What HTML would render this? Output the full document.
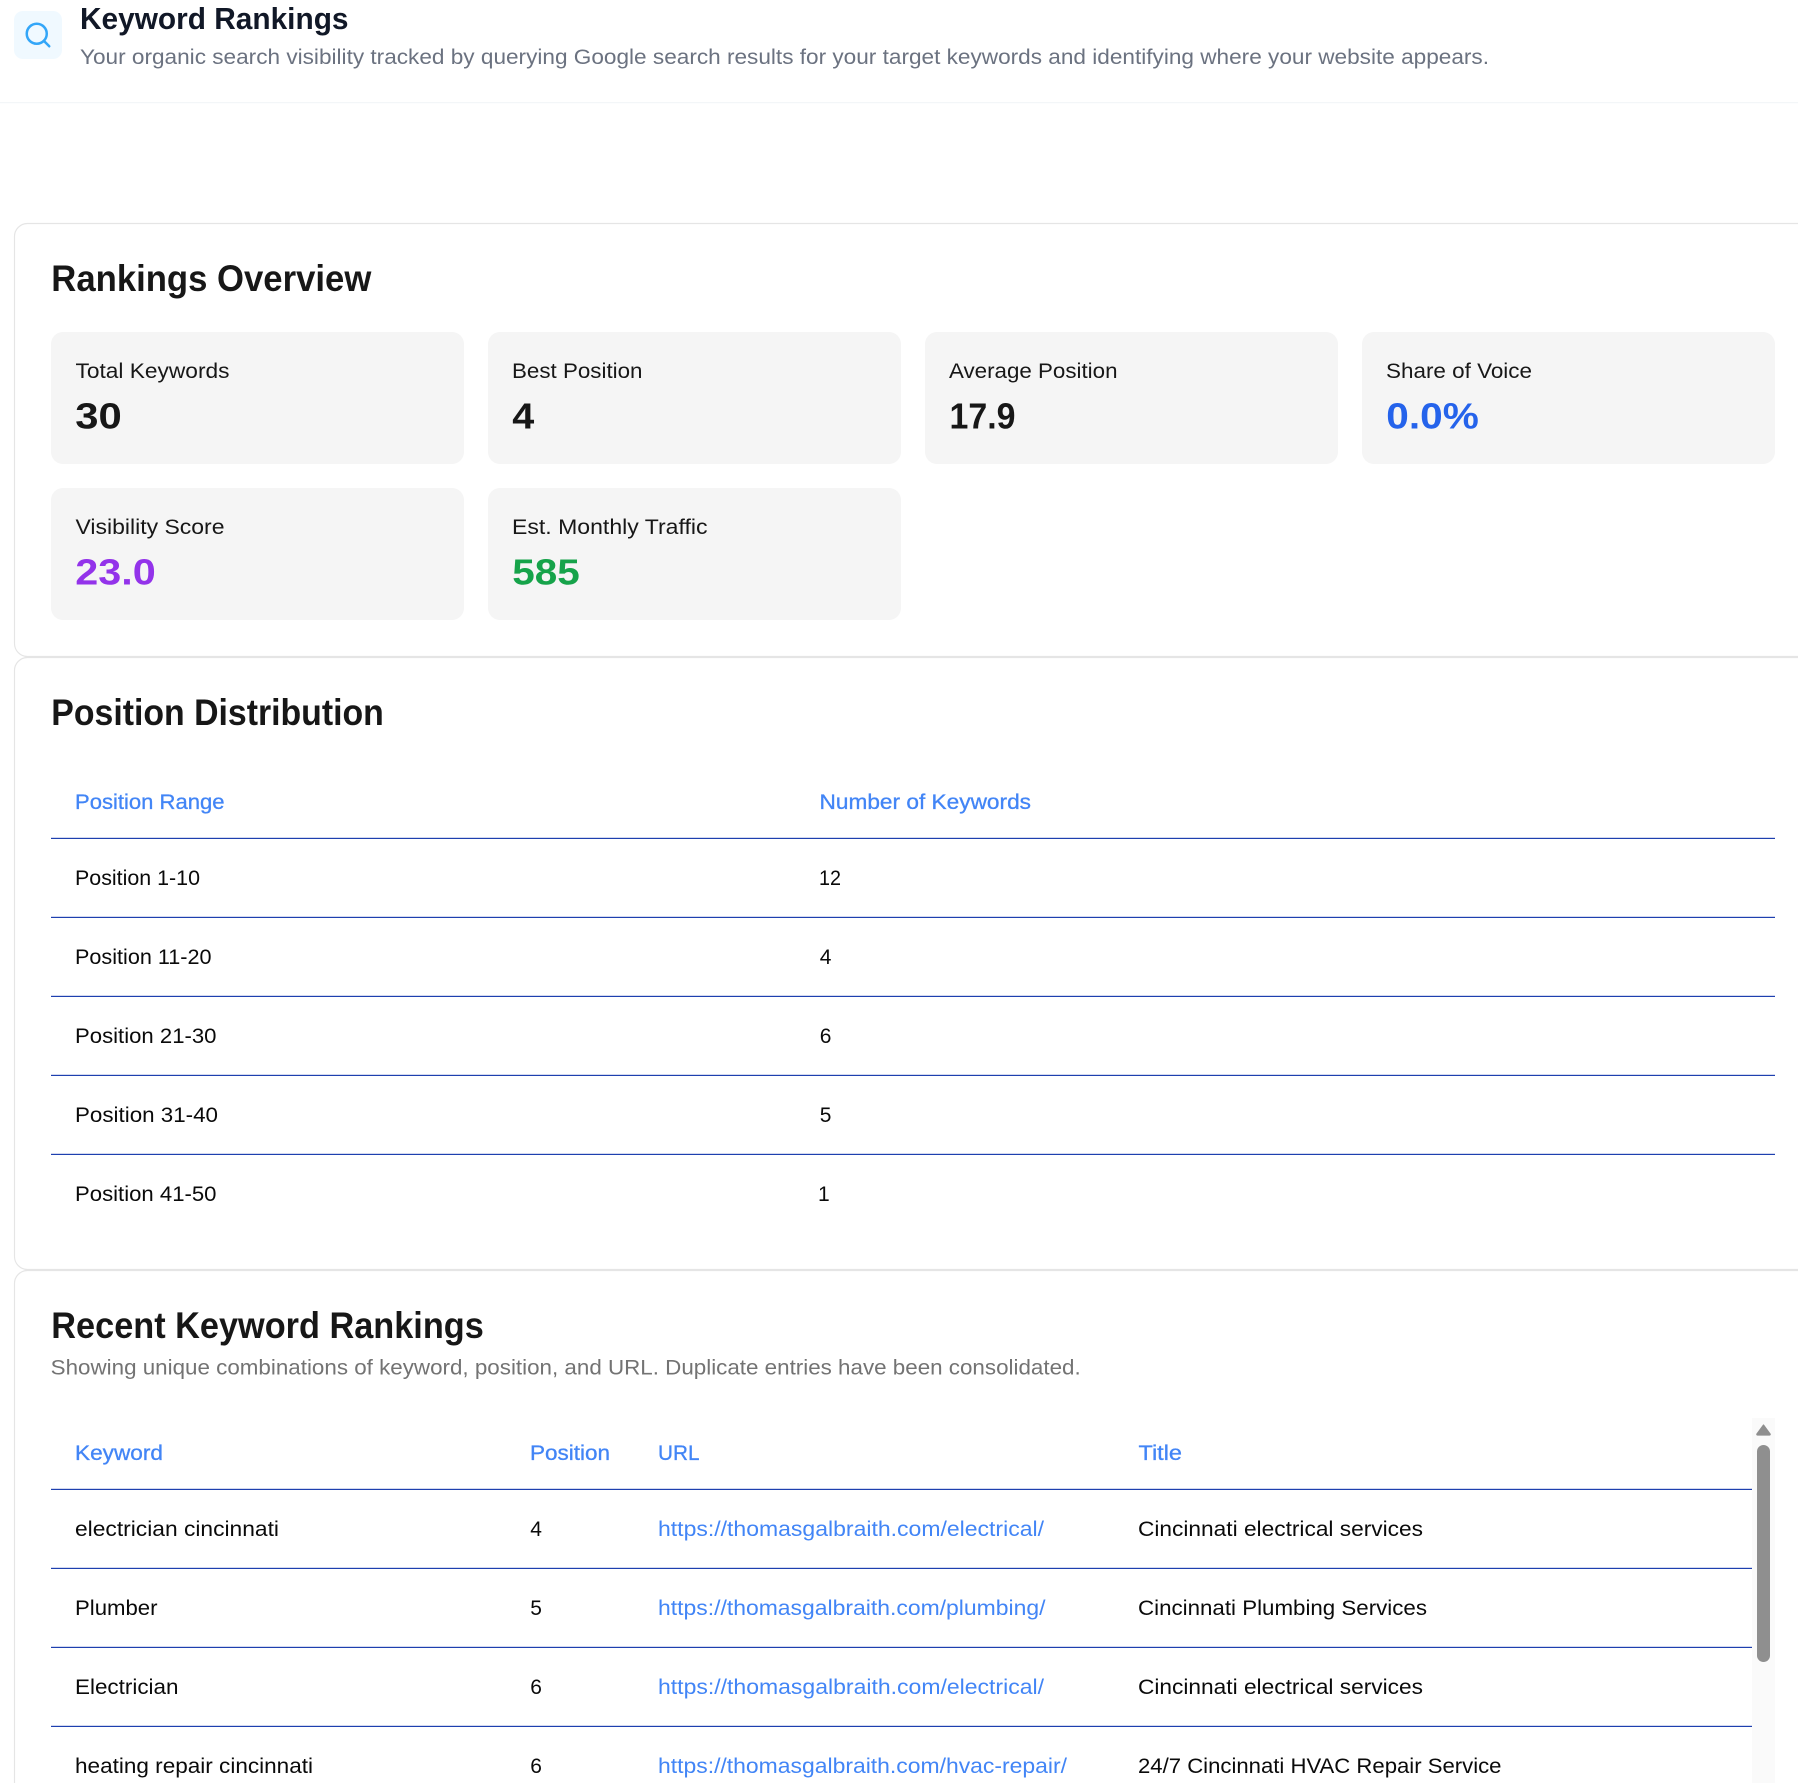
<!DOCTYPE html>
<html lang="en">
<head>
<meta charset="utf-8">
<title>Keyword Rankings</title>
<style>
html,body{margin:0;padding:0;background:#fff;width:1798px;height:1783px;overflow:hidden}
svg{display:block}
text{font-family:"Liberation Sans",Arial,sans-serif;white-space:pre}
.h{font-size:37.5px;font-weight:700;fill:#171717}
.l{font-size:21px;fill:#171717}
.v{font-size:36px;font-weight:700;fill:#171717}
.th{font-size:21px;fill:#4285f6;stroke:#4285f6;stroke-width:.3px}
.td{font-size:21px;fill:#0a0a0a}
.a{font-size:21px;fill:#4285f6}
</style>
</head>
<body>
<svg xmlns="http://www.w3.org/2000/svg" width="1798" height="1783" viewBox="0 0 1798 1783">
<rect width="1798" height="1783" fill="#fff"/>

<!-- header -->
<rect x="14" y="11" width="48" height="48" rx="9" fill="#f0f9ff"/>
<g transform="translate(23 20) scale(1.25)" fill="none" stroke="#33a6f8" stroke-width="2" stroke-linecap="round" stroke-linejoin="round">
<circle cx="11" cy="11" r="8"/>
<path d="m21 21-4.3-4.3"/>
</g>
<text x="80" y="29" font-size="31" font-weight="700" fill="#111827" textLength="268.5" lengthAdjust="spacingAndGlyphs">Keyword Rankings</text>
<text x="80" y="64" font-size="21" fill="#6b7280" textLength="1409" lengthAdjust="spacingAndGlyphs">Your organic search visibility tracked by querying Google search results for your target keywords and identifying where your website appears.</text>
<rect x="0" y="102" width="1798" height="1.2" fill="#f3f6f8"/>

<!-- cards -->
<path d="M1798 223.5H27.5a13 13 0 0 0-13 13V643.5a13 13 0 0 0 13 13H1798" fill="none" stroke="#e5e5e5" stroke-width="1.15"/>
<path d="M1798 657.5H27.5a13 13 0 0 0-13 13V1256.5a13 13 0 0 0 13 13H1798" fill="none" stroke="#e5e5e5" stroke-width="1.15"/>
<path d="M1798 1270.5H27.5a13 13 0 0 0-13 13V1783" fill="none" stroke="#e5e5e5" stroke-width="1.15"/>

<!-- Rankings Overview -->
<text class="h" x="51.3" y="291" textLength="320" lengthAdjust="spacingAndGlyphs">Rankings Overview</text>

<rect x="51" y="332" width="413" height="132" rx="12" fill="#f5f5f5"/>
<rect x="488" y="332" width="413" height="132" rx="12" fill="#f5f5f5"/>
<rect x="925" y="332" width="413" height="132" rx="12" fill="#f5f5f5"/>
<rect x="1362" y="332" width="413" height="132" rx="12" fill="#f5f5f5"/>
<rect x="51" y="488" width="413" height="132" rx="12" fill="#f5f5f5"/>
<rect x="488" y="488" width="413" height="132" rx="12" fill="#f5f5f5"/>

<text class="l" x="75.5" y="378" textLength="154" lengthAdjust="spacingAndGlyphs">Total Keywords</text>
<text class="v" x="75.3" y="428.5" textLength="46.5" lengthAdjust="spacingAndGlyphs">30</text>
<text class="l" x="512" y="378" textLength="130.5" lengthAdjust="spacingAndGlyphs">Best Position</text>
<text class="v" x="512.3" y="428.5" textLength="22" lengthAdjust="spacingAndGlyphs">4</text>
<text class="l" x="949" y="378" textLength="168.5" lengthAdjust="spacingAndGlyphs">Average Position</text>
<text class="v" x="949.5" y="428.5" textLength="66" lengthAdjust="spacingAndGlyphs">17.9</text>
<text class="l" x="1386" y="378" textLength="146" lengthAdjust="spacingAndGlyphs">Share of Voice</text>
<text class="v" x="1386.3" y="428.5" textLength="92.5" lengthAdjust="spacingAndGlyphs" style="fill:#2563eb">0.0%</text>
<text class="l" x="75.5" y="534" textLength="149" lengthAdjust="spacingAndGlyphs">Visibility Score</text>
<text class="v" x="75.3" y="584.5" textLength="80.5" lengthAdjust="spacingAndGlyphs" style="fill:#9333ea">23.0</text>
<text class="l" x="512" y="534" textLength="195.5" lengthAdjust="spacingAndGlyphs">Est. Monthly Traffic</text>
<text class="v" x="512.3" y="584.5" textLength="67.5" lengthAdjust="spacingAndGlyphs" style="fill:#16a34a">585</text>

<!-- Position Distribution -->
<text class="h" x="51.3" y="725" textLength="332.5" lengthAdjust="spacingAndGlyphs">Position Distribution</text>
<text class="th" x="75" y="809" textLength="149.5" lengthAdjust="spacingAndGlyphs">Position Range</text>
<text class="th" x="819.5" y="809" textLength="211.5" lengthAdjust="spacingAndGlyphs">Number of Keywords</text>
<rect x="51" y="837.8" width="1724" height="1.2" fill="#1e40af"/>
<text class="td" x="75" y="885" textLength="125" lengthAdjust="spacingAndGlyphs">Position 1-10</text>
<text class="td" x="819" y="885" textLength="22" lengthAdjust="spacingAndGlyphs">12</text>
<rect x="51" y="916.8" width="1724" height="1.2" fill="#1e40af"/>
<text class="td" x="75" y="964" textLength="136.5" lengthAdjust="spacingAndGlyphs">Position 11-20</text>
<text class="td" x="819.7" y="964">4</text>
<rect x="51" y="995.8" width="1724" height="1.2" fill="#1e40af"/>
<text class="td" x="75" y="1043" textLength="141.5" lengthAdjust="spacingAndGlyphs">Position 21-30</text>
<text class="td" x="819.7" y="1043">6</text>
<rect x="51" y="1074.8" width="1724" height="1.2" fill="#1e40af"/>
<text class="td" x="75" y="1122" textLength="143" lengthAdjust="spacingAndGlyphs">Position 31-40</text>
<text class="td" x="819.7" y="1122">5</text>
<rect x="51" y="1153.8" width="1724" height="1.2" fill="#1e40af"/>
<text class="td" x="75" y="1201" textLength="141.5" lengthAdjust="spacingAndGlyphs">Position 41-50</text>
<text class="td" x="818" y="1201">1</text>

<!-- Recent Keyword Rankings -->
<text class="h" x="51.3" y="1338" textLength="432.5" lengthAdjust="spacingAndGlyphs">Recent Keyword Rankings</text>
<text x="50.7" y="1374.5" font-size="21" fill="#737373" textLength="1030" lengthAdjust="spacingAndGlyphs">Showing unique combinations of keyword, position, and URL. Duplicate entries have been consolidated.</text>

<text class="th" x="75" y="1460" textLength="88" lengthAdjust="spacingAndGlyphs">Keyword</text>
<text class="th" x="530" y="1460" textLength="80" lengthAdjust="spacingAndGlyphs">Position</text>
<text class="th" x="658" y="1460" textLength="41.5" lengthAdjust="spacingAndGlyphs">URL</text>
<text class="th" x="1138.5" y="1460" textLength="43.5" lengthAdjust="spacingAndGlyphs">Title</text>
<rect x="51" y="1488.8" width="1701" height="1.2" fill="#1e40af"/>

<text class="td" x="75" y="1536" textLength="204" lengthAdjust="spacingAndGlyphs">electrician cincinnati</text>
<text class="td" x="530.2" y="1536">4</text>
<text class="a" x="658" y="1536" textLength="386" lengthAdjust="spacingAndGlyphs">https://thomasgalbraith.com/electrical/</text>
<text class="td" x="1138" y="1536" textLength="285" lengthAdjust="spacingAndGlyphs">Cincinnati electrical services</text>
<rect x="51" y="1567.8" width="1701" height="1.2" fill="#1e40af"/>

<text class="td" x="75" y="1615" textLength="82.5" lengthAdjust="spacingAndGlyphs">Plumber</text>
<text class="td" x="530.2" y="1615">5</text>
<text class="a" x="658" y="1615" textLength="387.5" lengthAdjust="spacingAndGlyphs">https://thomasgalbraith.com/plumbing/</text>
<text class="td" x="1138" y="1615" textLength="289" lengthAdjust="spacingAndGlyphs">Cincinnati Plumbing Services</text>
<rect x="51" y="1646.8" width="1701" height="1.2" fill="#1e40af"/>

<text class="td" x="75" y="1694" textLength="103.5" lengthAdjust="spacingAndGlyphs">Electrician</text>
<text class="td" x="530.2" y="1694">6</text>
<text class="a" x="658" y="1694" textLength="386" lengthAdjust="spacingAndGlyphs">https://thomasgalbraith.com/electrical/</text>
<text class="td" x="1138" y="1694" textLength="285" lengthAdjust="spacingAndGlyphs">Cincinnati electrical services</text>
<rect x="51" y="1725.8" width="1701" height="1.2" fill="#1e40af"/>

<text class="td" x="75" y="1773" textLength="238" lengthAdjust="spacingAndGlyphs">heating repair cincinnati</text>
<text class="td" x="530.2" y="1773">6</text>
<text class="a" x="658" y="1773" textLength="409" lengthAdjust="spacingAndGlyphs">https://thomasgalbraith.com/hvac-repair/</text>
<text class="td" x="1138" y="1773" textLength="363.5" lengthAdjust="spacingAndGlyphs">24/7 Cincinnati HVAC Repair Service</text>

<!-- scrollbar -->
<rect x="1752" y="1418" width="23" height="365" fill="#fafafa"/>
<path d="M1763.5 1425 L1770 1433.8 Q1770.6 1435 1769.5 1435 L1757.5 1435 Q1756.4 1435 1757 1433.8 Z" fill="#8f8f8f" stroke="#8f8f8f" stroke-width="1.2" stroke-linejoin="round"/>
<rect x="1757" y="1445" width="13" height="217" rx="6.5" fill="#8f8f8f"/>
</svg>
</body>
</html>
